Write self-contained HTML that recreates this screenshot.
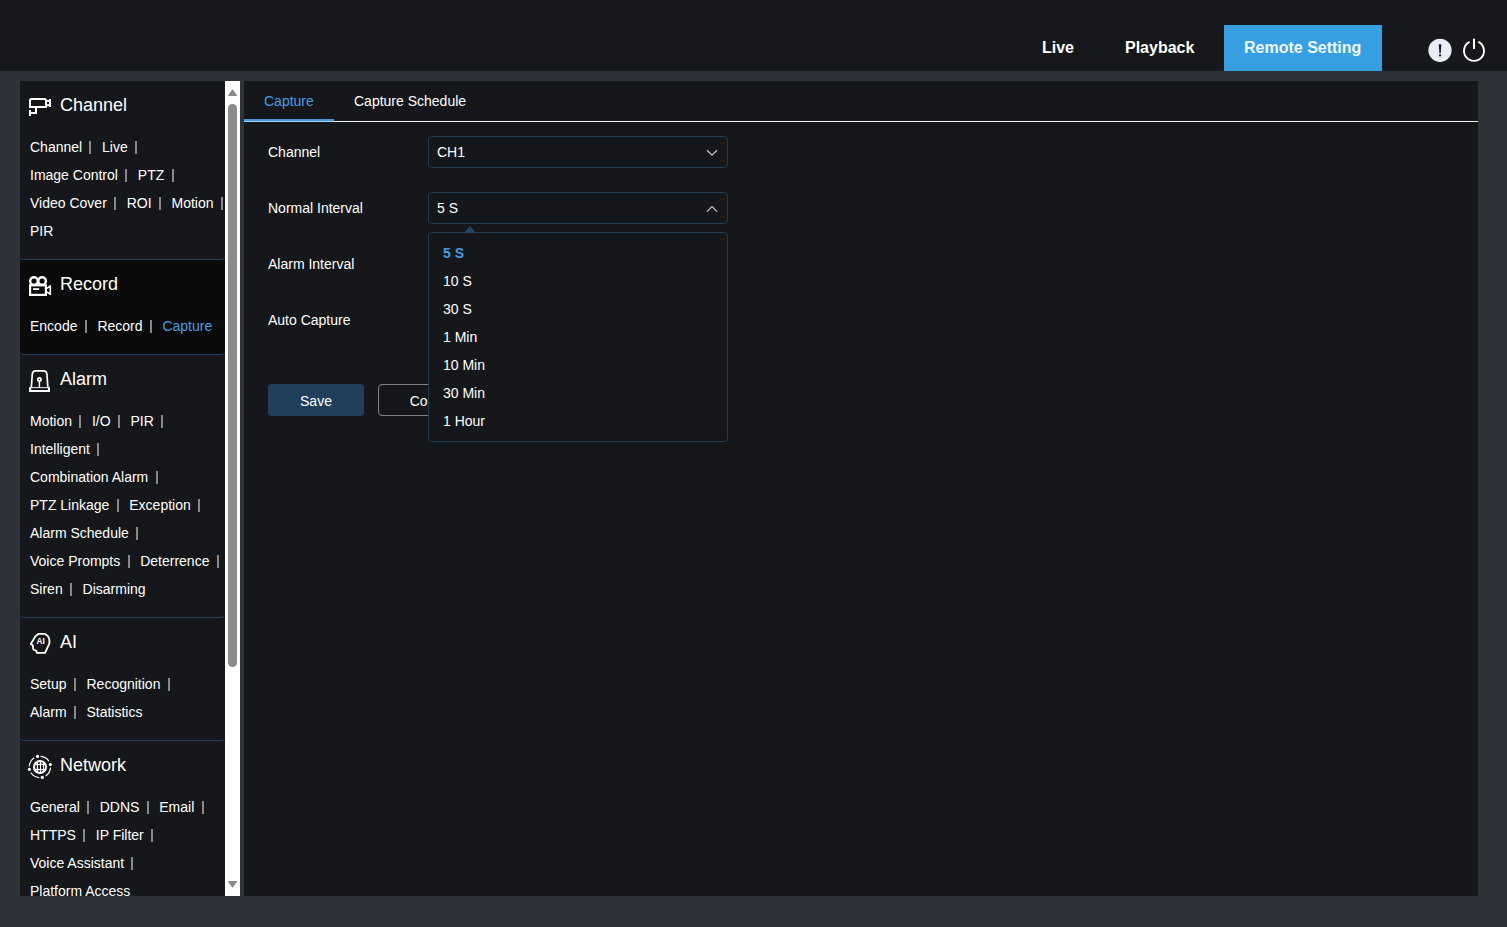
<!DOCTYPE html>
<html>
<head>
<meta charset="utf-8">
<title>Remote Setting</title>
<style>
*{box-sizing:border-box;margin:0;padding:0}
html,body{width:1507px;height:927px;overflow:hidden}
body{background:#2d3238;font-family:"Liberation Sans",sans-serif;font-size:14px;color:#fff;position:relative}
.hdr{position:absolute;left:0;top:0;width:1507px;height:71px;background:#17181c}
.nav{position:absolute;top:25px;height:46px;line-height:45px;font-weight:bold;font-size:16px;color:#fff;padding:0 20px;white-space:nowrap}
.nav.act{background:#36a0e2;color:#f2f7fb}
.ico{position:absolute}
/* sidebar */
.side{position:absolute;left:20px;top:81px;width:205px;height:815px;background:#15171b;overflow:hidden}
.sec{border-bottom:1px solid #27425c;border-radius:4px;padding-bottom:14px;position:relative}
.sec.on{background:#0b0b0b}
.sec h3{height:48px;line-height:48px;font-size:18px;font-weight:normal;padding-left:40px;color:#fff}
.sec h3 svg{position:absolute;left:0;top:0}
.rows{padding:4px 0 0 10px}
.rows div{height:28px;line-height:28px;white-space:nowrap}
.rows i{display:inline-block;width:2px;height:13px;background:#888;margin:0 10.6px 0 7.3px;vertical-align:-1.5px;font-size:0;overflow:hidden}
.rows .cur{color:#4b9be0}
/* scrollbar */
.sb{position:absolute;left:225px;top:81px;width:15px;height:815px;background:#fdfdfe}
.sb .th{position:absolute;left:3px;top:23px;width:9px;height:563px;border-radius:4.5px;background:#8b8b8b}
.sb .up{position:absolute;left:3px;top:8px;width:0;height:0;border-left:4.5px solid transparent;border-right:4.5px solid transparent;border-bottom:7px solid #8b8b8b}
.sb .dn{position:absolute;left:3px;top:800px;width:0;height:0;border-left:4.5px solid transparent;border-right:4.5px solid transparent;border-top:7px solid #8b8b8b}
/* main */
.main{position:absolute;left:244px;top:81px;width:1234px;height:815px;background:#15171b}
.tabs{height:41px;border-bottom:1px solid #f4f4f4;position:relative}
.tab{position:absolute;top:0;height:40px;line-height:40px;padding:0 20px;color:#fff}
.tab.act{color:#4b9be0}
.tab.act:after{content:"";position:absolute;left:0;right:0;bottom:-1px;height:3px;background:linear-gradient(#4a94d3 0,#4a94d3 66%,#9fd6f7 66%)}
.lbl{position:absolute;left:24px;height:32px;line-height:32px}
.sel{position:absolute;left:184px;width:300px;height:32px;border:1px solid #203b55;border-radius:3.5px;line-height:30px;padding-left:8px;color:#fff}
.sel svg{position:absolute;right:9px;top:11.5px}
.btn{position:absolute;top:303px;width:96px;height:32px;line-height:34px;text-align:center;border-radius:4px}
.btn.save{left:24px;background:#203f5b}
.btn.copy{left:134px;border:1px solid #828282;line-height:32px}
.dd{position:absolute;left:184px;top:151px;width:300px;height:210px;border:1px solid #203b55;border-radius:3.5px;background:#15171b;padding:6px 0}
.dd div{height:28px;line-height:28px;padding-left:14px}
.dd .cur{color:#3f9ee5;font-weight:bold}
.arr{position:absolute;left:220px;top:145px;width:0;height:0;border-left:6px solid transparent;border-right:6px solid transparent;border-bottom:7px solid #224466;z-index:3}
</style>
</head>
<body>
<div class="hdr">
  <div class="nav" style="left:1022px">Live</div>
  <div class="nav" style="left:1105px">Playback</div>
  <div class="nav act" style="left:1224px;width:158px">Remote Setting</div>
  <svg class="ico" style="left:1426px;top:36px" width="64" height="30" viewBox="0 0 64 30">
    <circle cx="14" cy="14.3" r="11.6" fill="#e9eef6"/>
    <path d="M12.75 8.3 H15.35 L14.7 17.3 H13.4 Z" fill="#17181c"/>
    <circle cx="14.05" cy="19.45" r="1.15" fill="#17181c"/>
    <path d="M43.6 5.9 A10 10 0 1 0 52.4 5.9" fill="none" stroke="#fff" stroke-width="1.9"/>
    <path d="M48 2.8 V13" stroke="#fff" stroke-width="2"/>
  </svg>
</div>

<div class="side">
  <div class="sec">
    <h3><svg width="40" height="48" viewBox="0 0 40 48"><g fill="none" stroke="#fff" stroke-width="2"><path d="M10 26 V19.5 Q10 18 11.5 18 H24.5 Q26 18 26 19.5 V26 Z"/><path d="M27 20 H29 M27 24.2 H29 M30 18 V26 M16 27 V32 H11 M10 29 V35"/></g></svg>Channel</h3>
    <div class="rows">
      <div>Channel<i>|</i>Live<i>|</i></div>
      <div>Image Control<i>|</i>PTZ<i>|</i></div>
      <div>Video Cover<i>|</i>ROI<i>|</i>Motion<i>|</i></div>
      <div>PIR</div>
    </div>
  </div>
  <div class="sec on">
    <h3><svg width="40" height="48" viewBox="0 0 40 48"><g fill="none" stroke="#fff"><rect x="10.1" y="25.3" width="15.8" height="9.6" stroke-width="2.2"/><circle cx="14" cy="21" r="3.8" stroke-width="2.4"/><circle cx="22.1" cy="21" r="3.8" stroke-width="2.4"/><path d="M27 28.4 L30.3 25.8 V34.4 L27 31.8" stroke-width="1.6" stroke-linejoin="round"/></g><rect x="13" y="28.2" width="6.2" height="1.8" fill="#fff"/></svg>Record</h3>
    <div class="rows">
      <div>Encode<i>|</i>Record<i>|</i><span class="cur">Capture</span></div>
    </div>
  </div>
  <div class="sec">
    <h3><svg width="40" height="48" viewBox="0 0 40 48"><g fill="none" stroke="#fff" stroke-width="1.7"><rect x="9" y="32.2" width="21" height="4.8" fill="#fff" stroke="none"/><rect x="11.2" y="33.15" width="16.7" height="1.85" fill="#101114" stroke="none"/><path d="M11.3 32.5 L12.3 19 Q12.6 15.8 16 15.8 H23.2 Q26.6 15.8 26.9 19 L27.9 32.5"/><circle cx="19.4" cy="24.4" r="1.6" stroke-width="1.8"/><path d="M19.4 26.5 V32.5" stroke-width="1.4"/></g></svg>Alarm</h3>
    <div class="rows">
      <div>Motion<i>|</i>I/O<i>|</i>PIR<i>|</i></div>
      <div>Intelligent<i>|</i></div>
      <div>Combination Alarm<i>|</i></div>
      <div>PTZ Linkage<i>|</i>Exception<i>|</i></div>
      <div>Alarm Schedule<i>|</i></div>
      <div>Voice Prompts<i>|</i>Deterrence<i>|</i></div>
      <div>Siren<i>|</i>Disarming</div>
    </div>
  </div>
  <div class="sec">
    <h3><svg width="40" height="48" viewBox="0 0 40 48"><path d="M10.8 26 L15.4 18.4 L18.5 15.8 H24.7 L28.2 18.4 L29.4 21.8 V25.3 L25.1 34.9 H16.8 L16.4 32.8 L13.3 31.5 L12.8 27.3 Z" fill="none" stroke="#fff" stroke-width="1.8" stroke-linejoin="round"/><text x="20.6" y="26" font-family="Liberation Sans" font-weight="bold" font-size="8.2" fill="#fff" text-anchor="middle">AI</text></svg>AI</h3>
    <div class="rows">
      <div>Setup<i>|</i>Recognition<i>|</i></div>
      <div>Alarm<i>|</i>Statistics</div>
    </div>
  </div>
  <div class="sec">
    <h3><svg width="40" height="48" viewBox="0 0 40 48"><g transform="translate(19.9,25.9)" fill="none" stroke="#fff"><circle cx="0.08" cy="0.13" r="7.05" fill="#fff" stroke="none"/><g stroke-width="1.25" stroke-linecap="round"><path d="M1.1 -10.6 A10.7 10.7 0 0 1 8.8 -6.1"/><path d="M10.6 1.1 A10.7 10.7 0 0 1 6.1 8.8"/><path d="M-1.1 10.6 A10.7 10.7 0 0 1 -8.8 6.1"/><path d="M-10.6 -1.1 A10.7 10.7 0 0 1 -6.1 -8.8"/></g><g fill="#fff" stroke="none"><circle cx="-2.4" cy="-10.5" r="1.6"/><circle cx="10.5" cy="-2.4" r="1.6"/><circle cx="2.4" cy="10.5" r="1.6"/><circle cx="-10.5" cy="2.4" r="1.6"/></g></g><clipPath id="gc"><circle cx="20.08" cy="26.05" r="5"/></clipPath><g clip-path="url(#gc)" fill="#0b0c0f"><rect x="14.5" y="24.1" width="2.3" height="3.8"/><rect x="18.1" y="24.1" width="1.8" height="3.8"/><rect x="21.1" y="24.1" width="1.85" height="3.8"/><rect x="24.1" y="24.1" width="2" height="3.8"/><rect x="16" y="21.1" width="0.8" height="1.7"/><rect x="18.1" y="21.1" width="1.8" height="1.7"/><rect x="21.1" y="21.1" width="1.85" height="1.7"/><rect x="24.1" y="21.1" width="0.8" height="1.7"/><rect x="16" y="29.2" width="0.8" height="1.8"/><rect x="18.1" y="29.2" width="1.8" height="1.8"/><rect x="21.1" y="29.2" width="1.85" height="1.8"/><rect x="24.1" y="29.2" width="0.8" height="1.8"/></g></svg>Network</h3>
    <div class="rows">
      <div>General<i>|</i>DDNS<i>|</i>Email<i>|</i></div>
      <div>HTTPS<i>|</i>IP Filter<i>|</i></div>
      <div>Voice Assistant<i>|</i></div>
      <div>Platform Access</div>
    </div>
  </div>
</div>
<div class="sb"><svg style="position:absolute;left:3px;top:7px" width="9" height="9" viewBox="0 0 9 9"><path d="M0.7 7.4 L4.5 2.1 L8.3 7.4 Z" fill="#8b8b8b" stroke="#8b8b8b" stroke-width="1.2" stroke-linejoin="round"/></svg><div class="th"></div><svg style="position:absolute;left:3px;top:799px" width="9" height="9" viewBox="0 0 9 9"><path d="M0.7 1.6 L4.5 6.9 L8.3 1.6 Z" fill="#8b8b8b" stroke="#8b8b8b" stroke-width="1.2" stroke-linejoin="round"/></svg></div>

<div class="main">
  <div class="tabs">
    <div class="tab act" style="left:0">Capture</div>
    <div class="tab" style="left:90px">Capture Schedule</div>
  </div>
  <div class="lbl" style="top:55px">Channel</div>
  <div class="sel" style="top:55px">CH1<svg width="12" height="8" viewBox="0 0 12 8"><path d="M1 1.2 L6 6.2 L11 1.2" fill="none" stroke="#c3c6cc" stroke-width="1.3"/></svg></div>
  <div class="lbl" style="top:111px">Normal Interval</div>
  <div class="sel" style="top:111px">5 S<svg width="12" height="8" viewBox="0 0 12 8"><path d="M1 6.6 L6 1.6 L11 6.6" fill="none" stroke="#c3c6cc" stroke-width="1.3"/></svg></div>
  <div class="lbl" style="top:167px">Alarm Interval</div>
  <div class="lbl" style="top:223px">Auto Capture</div>
  <div class="btn save">Save</div>
  <div class="btn copy">Copy</div>
  <div class="arr"></div>
  <div class="dd">
    <div class="cur">5 S</div>
    <div>10 S</div>
    <div>30 S</div>
    <div>1 Min</div>
    <div>10 Min</div>
    <div>30 Min</div>
    <div>1 Hour</div>
  </div>
</div>
</body>
</html>
